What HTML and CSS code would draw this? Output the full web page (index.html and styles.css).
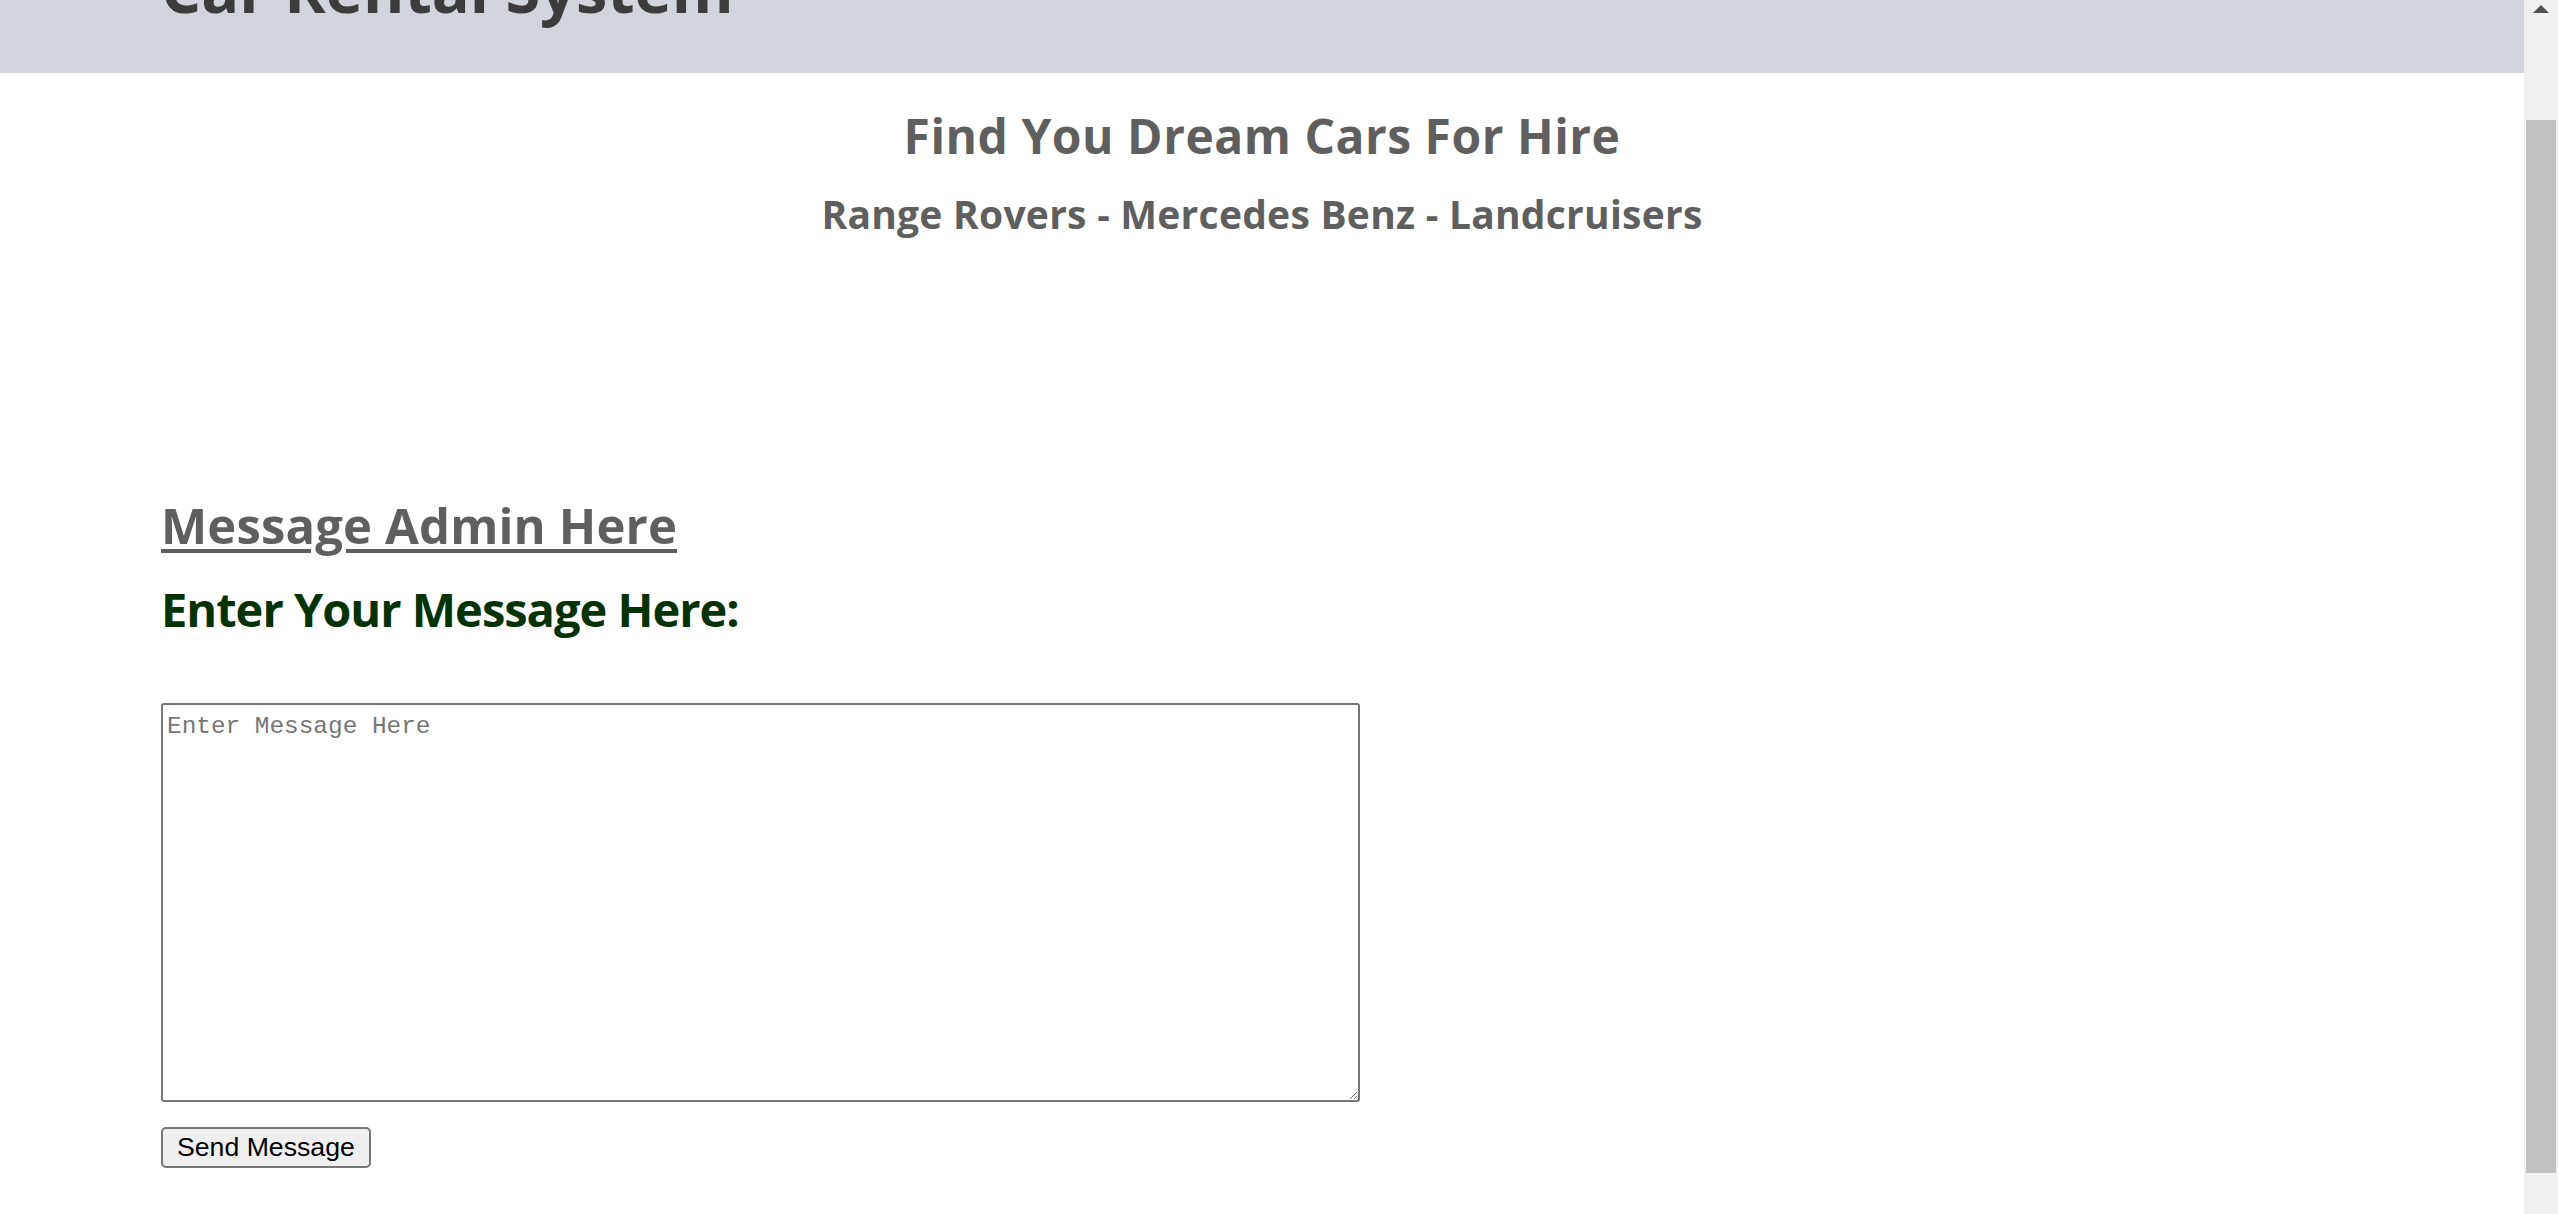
FILE: index.html
```html
<!DOCTYPE html>
<html lang="en">
<head>
<meta charset="utf-8">
<title>Car Rental System</title>
<link rel="stylesheet" href="styles.css">
</head>
<body>
<div class="page">
  <header class="topbar">
    <h1 class="brand">Car Rental System</h1>
  </header>
  <main class="content">
    <h2 class="hero-title">Find You Dream Cars For Hire</h2>
    <h3 class="hero-sub">Range Rovers - Mercedes Benz - Landcruisers</h3>
    <h2 class="section-title">Message Admin Here</h2>
    <h2 class="form-label">Enter Your Message Here:</h2>
    <form class="msg-form">
      <textarea class="msg-box" placeholder="Enter Message Here"></textarea>
      <button type="button" class="send-btn">Send Message</button>
    </form>
  </main>
</div>
<div class="scrollbar">
  <div class="scroll-arrow"></div>
  <div class="scroll-thumb"></div>
</div>
</body>
</html>
```
FILE: styles.css
```css
html, body {
  margin: 0;
  padding: 0;
  height: 100%;
  overflow: hidden;
  background: #ffffff;
}
body {
  display: flex;
  flex-direction: row;
  font-family: "Open Sans", "Noto Sans", sans-serif;
}
.page {
  flex: 1 1 auto;
  min-width: 0;
}
.topbar {
  height: 73px;
  background: #d2d6dc;
  overflow: hidden;
  padding-left: 161px;
}
.brand {
  margin: -43px 0 0 0;
  font-size: 63px;
  line-height: 63px;
  font-weight: 700;
  color: #3c3c3c;
}
.content {
  padding: 0 161px;
}
.hero-title {
  margin: 33px 0 0 0;
  text-align: center;
  font-size: 48px;
  line-height: 60px;
  font-weight: 700;
  letter-spacing: 0.5px;
  color: #5f5f5f;
}
.hero-sub {
  margin: 23px 0 0 0;
  text-align: center;
  font-size: 39px;
  line-height: 50px;
  font-weight: 700;
  letter-spacing: 0.25px;
  color: #5f5f5f;
}
.section-title {
  margin: 256px 0 0 0;
  font-size: 49px;
  line-height: 60px;
  font-weight: 700;
  letter-spacing: 0.15px;
  color: #5f5f5f;
  text-decoration: underline;
  text-decoration-thickness: 4px;
  text-underline-offset: 5px;
}
.form-label {
  margin: 24px 0 0 0;
  font-size: 47px;
  line-height: 60px;
  font-weight: 700;
  letter-spacing: -1px;
  color: #033303;
}
.msg-form {
  display: flex;
  flex-direction: column;
  align-items: flex-start;
  gap: 25px;
  margin-top: 64px;
}
.msg-box {
  display: block;
  box-sizing: border-box;
  width: 1199px;
  height: 399px;
  margin: 0;
  border: 2px solid #767676;
  border-radius: 3px;
  padding: 8px 4px 4px 4px;
  font-family: "Liberation Mono", "DejaVu Sans Mono", monospace;
  font-size: 24.4px;
  color: #000;
  background: #fff;
}
.msg-box::placeholder {
  color: #767676;
}
.send-btn {
  box-sizing: border-box;
  height: 41px;
  margin: 0;
  padding: 0 14px;
  border: 2px solid #767676;
  border-radius: 5px;
  background: #efefef;
  color: #000;
  font-family: "Liberation Sans", Arial, sans-serif;
  font-size: 26.67px;
  line-height: 1;
}
.scrollbar {
  flex: 0 0 34px;
  width: 34px;
  height: 100%;
  background: #f0f0f0;
  display: flex;
  flex-direction: column;
  align-items: center;
  padding-top: 5px;
  box-sizing: border-box;
}
.scroll-arrow {
  width: 0;
  height: 0;
  border-left: 8px solid transparent;
  border-right: 8px solid transparent;
  border-bottom: 8px solid #505050;
}
.scroll-thumb {
  margin-top: 107px;
  width: 30px;
  height: 1053px;
  background: #c1c1c1;
}
```
